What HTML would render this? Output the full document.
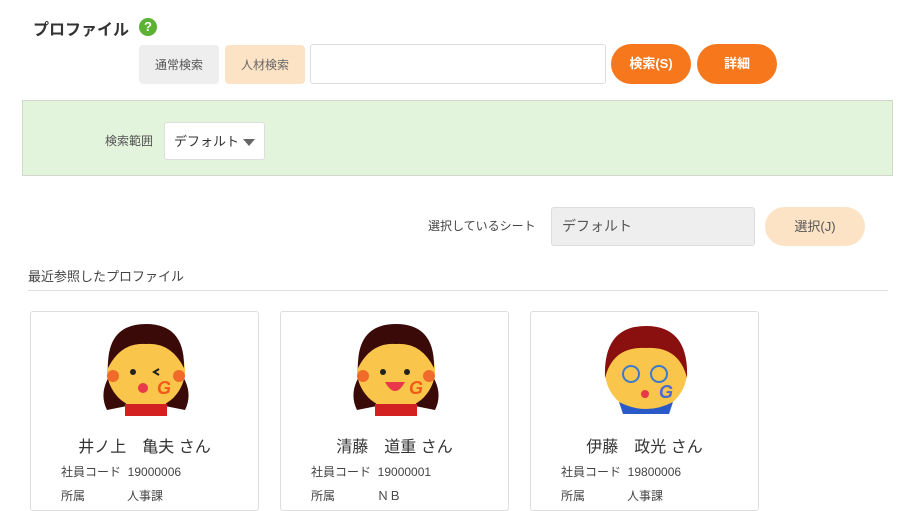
<!DOCTYPE html><html><head><meta charset="utf-8"><style>
*{box-sizing:border-box;margin:0;padding:0}
body{width:916px;height:504px;overflow:hidden;background:#fff;font-family:"Liberation Sans","Noto Sans CJK JP",sans-serif;color:#333;position:relative}
.a{position:absolute}
.btn{position:absolute;display:flex;align-items:center;justify-content:center;font-size:12px;border-radius:4px}
.pill{position:absolute;display:flex;align-items:center;justify-content:center;border-radius:20px;font-size:13px;padding-bottom:3px}
.card{position:absolute;top:311px;width:229px;height:200px;border:1px solid #ddd;border-radius:3px;background:#fff}
.card svg{position:absolute;left:66px;top:8px}
.nm{position:absolute;top:121px;width:100%;text-align:center;font-size:16px;color:#333}
.r{position:absolute;left:30px;font-size:12px;color:#444}
</style></head><body>
<div class="a" style="left:33px;top:16px;font-size:16px;font-weight:bold;color:#333">プロファイル</div>
<div class="a" style="left:139px;top:18px;width:18px;height:18px;border-radius:50%;background:#5cb234;color:#fff;font-size:13px;font-weight:bold;text-align:center;line-height:18px">?</div>
<div class="btn" style="left:139px;top:45px;width:80px;height:39px;background:#eee;color:#555">通常検索</div>
<div class="btn" style="left:225px;top:45px;width:80px;height:39px;background:#fde3c6;color:#666">人材検索</div>
<div class="a" style="left:310px;top:44px;width:296px;height:40px;border:1px solid #ddd;border-radius:3px"></div>
<div class="pill" style="left:611px;top:44px;width:80px;height:40px;background:#f7781c;color:#fff;font-weight:bold">検索(S)</div>
<div class="pill" style="left:697px;top:44px;width:80px;height:40px;background:#f7781c;color:#fff;font-weight:bold">詳細</div>
<div class="a" style="left:22px;top:100px;width:871px;height:76px;background:#e2f4dc;border:1px solid #d0d8cc"></div>
<div class="a" style="left:105px;top:132px;font-size:12px;color:#555">検索範囲</div>
<div class="a" style="left:164px;top:122px;width:101px;height:38px;background:#fff;border:1px solid #ddd;border-radius:3px;font-size:13px;padding:8px 0 0 9px;color:#333">デフォルト<span style="position:absolute;left:78px;top:16px;border-left:6px solid transparent;border-right:6px solid transparent;border-top:7px solid #666"></span></div>
<div class="a" style="left:428px;top:217px;font-size:12px;color:#444">選択しているシート</div>
<div class="a" style="left:551px;top:207px;width:204px;height:39px;background:#eee;border:1px solid #ddd;border-radius:3px;font-size:14px;padding:8px 0 0 10px;color:#555">デフォルト</div>
<div class="pill" style="left:765px;top:207px;width:100px;height:39px;background:#fde3c6;color:#555">選択(J)</div>
<div class="a" style="left:28px;top:266px;font-size:13px;color:#444">最近参照したプロファイル</div>
<div class="a" style="left:28px;top:290px;width:860px;height:1px;background:#ddd"></div>

<div class="card" style="left:30px">
<svg width="98" height="98" viewBox="0 0 98 98"><path d="M18 48 Q0 70 10 90 L30 86Z M80 48 Q98 70 88 90 L68 86Z" fill="#3a0a08"/><circle cx="49" cy="50" r="39" fill="#f9c54a"/><path d="M11 48 Q10 4 49 4 Q88 4 87 48 Q74 22 49 24 Q24 22 11 48Z" fill="#3a0a08"/><circle cx="16" cy="56" r="6" fill="#f06b2a"/><circle cx="82" cy="56" r="6" fill="#f06b2a"/><circle cx="36" cy="52" r="3" fill="#222"/><path d="M62 49 L57 52 L62 55" stroke="#222" stroke-width="2" fill="none"/><circle cx="46" cy="68" r="5" fill="#e8384a"/><text x="60" y="74" font-size="18" font-weight="bold" font-style="italic" fill="#f25a1a" font-family="Liberation Sans">G</text><rect x="28" y="84" width="42" height="12" fill="#d32020"/></svg>
<div class="nm">井ノ上　亀夫 さん</div><div class="r" style="top:151px">社員コード&nbsp; 19000006</div><div class="r" style="top:175px">所属<span style="position:absolute;left:66px;white-space:nowrap">人事課</span></div></div>

<div class="card" style="left:280px">
<svg width="98" height="98" viewBox="0 0 98 98"><path d="M18 48 Q0 70 10 90 L30 86Z M80 48 Q98 70 88 90 L68 86Z" fill="#3a0a08"/><circle cx="49" cy="50" r="39" fill="#f9c54a"/><path d="M11 48 Q10 4 49 4 Q88 4 87 48 Q74 22 49 24 Q24 22 11 48Z" fill="#3a0a08"/><circle cx="16" cy="56" r="6" fill="#f06b2a"/><circle cx="82" cy="56" r="6" fill="#f06b2a"/><circle cx="36" cy="52" r="3" fill="#222"/><circle cx="60" cy="52" r="3" fill="#222"/><path d="M38 62 Q48 80 58 62Z" fill="#e8384a"/><text x="62" y="74" font-size="18" font-weight="bold" font-style="italic" fill="#f25a1a" font-family="Liberation Sans">G</text><rect x="28" y="84" width="42" height="12" fill="#d32020"/></svg>
<div class="nm">清藤　道重 さん</div><div class="r" style="top:151px">社員コード&nbsp; 19000001</div><div class="r" style="top:175px">所属<span style="position:absolute;left:66px;white-space:nowrap">ＮＢ</span></div></div>

<div class="card" style="left:530px">
<svg width="98" height="98" viewBox="0 0 98 98"><circle cx="49" cy="51" r="42" fill="#fff"/><circle cx="49" cy="51" r="41" fill="#f9c54a"/><path d="M8 58 Q6 6 49 6 Q92 6 90 58 Q82 26 49 28 Q16 26 8 58Z" fill="#8a1010"/><circle cx="34" cy="54" r="8" fill="none" stroke="#3a7ad0" stroke-width="2"/><circle cx="62" cy="54" r="8" fill="none" stroke="#3a7ad0" stroke-width="2"/><circle cx="48" cy="74" r="4" fill="#e8384a"/><text x="62" y="78" font-size="18" font-weight="bold" font-style="italic" fill="#4a6ad0" font-family="Liberation Sans">G</text><path d="M22 82 Q49 96 76 82 L72 94 L26 94Z" fill="#2a5ac8"/></svg>
<div class="nm">伊藤　政光 さん</div><div class="r" style="top:151px">社員コード&nbsp; 19800006</div><div class="r" style="top:175px">所属<span style="position:absolute;left:66px;white-space:nowrap">人事課</span></div></div>
</body></html>
